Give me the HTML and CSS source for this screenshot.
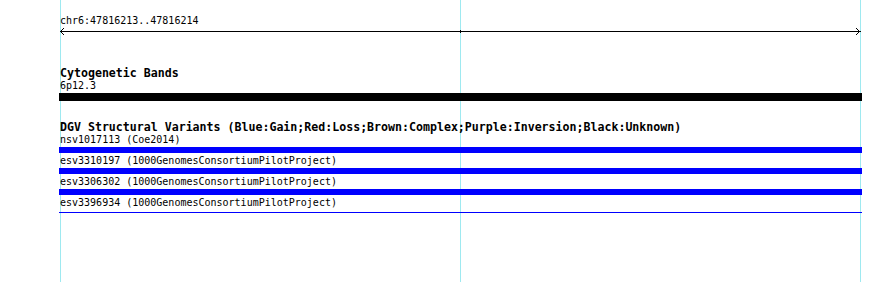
FILE: index.html
```html
<!DOCTYPE html>
<html lang="en">
<head>
    <meta charset="UTF-8">
    <title>chr6:47816213..47816214</title>
    <link rel="stylesheet" href="styles.css">
</head>
<body>
    <div class="tracks">
        <div class="ruler">
            <div class="item-label">chr6:47816213..47816214</div>
            <svg class="ruler-line" width="803" height="9" viewBox="0 0 803 9">
                <rect x="1" y="4" width="801" height="1" fill="#000"/>
                <polyline points="5,1 1.5,4.5 5,8" fill="none" stroke="#000" stroke-width="1"/>
                <polyline points="797,1 800.5,4.5 797,8" fill="none" stroke="#000" stroke-width="1"/>
                <rect x="401" y="3" width="1" height="3" fill="#000"/>
            </svg>
        </div>

        <div class="track">
            <h3 class="track-title">Cytogenetic Bands</h3>
            <div class="item-label">6p12.3</div>
            <div class="band"></div>
        </div>

        <div class="track dgv">
            <h3 class="track-title">DGV Structural Variants (Blue:Gain;Red:Loss;Brown:Complex;Purple:Inversion;Black:Unknown)</h3>
            <div class="item">
                <div class="item-label">nsv1017113 (Coe2014)</div>
                <div class="variant"></div>
            </div>
            <div class="item">
                <div class="item-label">esv3310197 (1000GenomesConsortiumPilotProject)</div>
                <div class="variant"></div>
            </div>
            <div class="item">
                <div class="item-label">esv3306302 (1000GenomesConsortiumPilotProject)</div>
                <div class="variant"></div>
            </div>
            <div class="item">
                <div class="item-label">esv3396934 (1000GenomesConsortiumPilotProject)</div>
                <div class="variant thin"></div>
            </div>
        </div>
    </div>
</body>
</html>
```

FILE: styles.css
```css
body {
    margin: 0;
    height: 282px;
    font-family: "DejaVu Sans Mono", "Liberation Mono", monospace;
    color: #000;
    background-color: #fff;
    /* guide lines at the ruler ticks */
    background-image:
        linear-gradient(#9ee9f0, #9ee9f0),
        linear-gradient(#9ee9f0, #9ee9f0),
        linear-gradient(#9ee9f0, #9ee9f0);
    background-size: 1px 100%;
    background-position: 60px 0, 460px 0, 860px 0;
    background-repeat: no-repeat;
}

.tracks {
    margin-left: 59px;
    width: 803px;
    padding-top: 14px;
}

.item-label {
    font-size: 10px;
    line-height: 12px;
    padding-top: 1px;
    padding-left: 1px;
    white-space: nowrap;
}

.ruler-line {
    display: block;
}

.track {
    margin-top: 31px;
}

.track.dgv {
    margin-top: 20px;
}

.track-title {
    margin: 0;
    padding-top: 1px;
    padding-left: 1px;
    font-size: 11.6px;
    line-height: 11px;
    font-weight: bold;
    white-space: nowrap;
}

.band {
    height: 8px;
    margin-top: 1px;
    background: #000;
}

.item {
    height: 21px;
}

.variant {
    height: 6px;
    margin-top: 1px;
    background: #0000ff;
}

.variant.thin {
    height: 1px;
    margin-top: 3px;
}
```
